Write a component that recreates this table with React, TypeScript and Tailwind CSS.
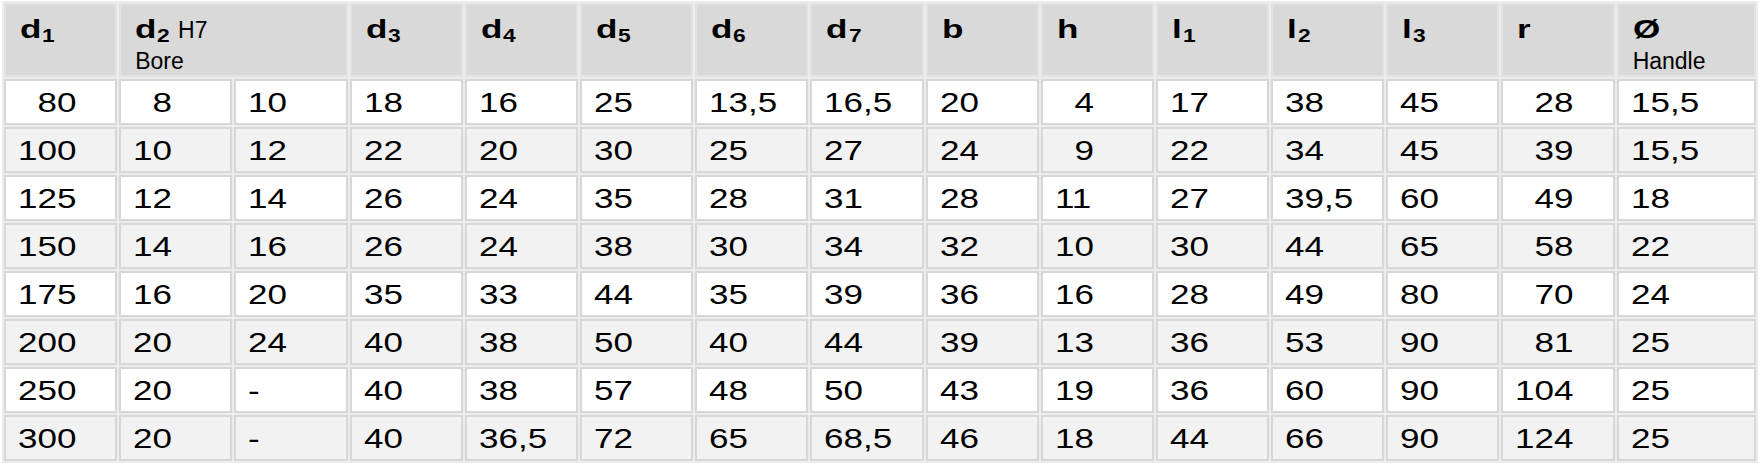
const rows: (number | string)[][] = [
  [80, 8, 10, 18, 16, 25, "13,5", "16,5", 20, 4, 17, 38, 45, 28, "15,5"],
  [100, 10, 12, 22, 20, 30, 25, 27, 24, 9, 22, 34, 45, 39, "15,5"],
  [125, 12, 14, 26, 24, 35, 28, 31, 28, 11, 27, "39,5", 60, 49, 18],
  [150, 14, 16, 26, 24, 38, 30, 34, 32, 10, 30, 44, 65, 58, 22],
  [175, 16, 20, 35, 33, 44, 35, 39, 36, 16, 28, 49, 80, 70, 24],
  [200, 20, 24, 40, 38, 50, 40, 44, 39, 13, 36, 53, 90, 81, 25],
  [250, 20, "-", 40, 38, 57, 48, 50, 43, 19, 36, 60, 90, 104, 25],
  [300, 20, "-", 40, "36,5", 72, 65, "68,5", 46, 18, 44, 66, 90, 124, 25],
];

// columns whose integers line up on the right digit
const padTo: Record<number, number> = { 0: 3, 1: 2, 9: 2, 13: 3 };

const headers: { main: string; sub?: string; extra?: string; note?: string; span?: boolean }[] = [
  { main: "d", sub: "1" },
  { main: "d", sub: "2", extra: "H7", note: "Bore", span: true },
  { main: "d", sub: "3" },
  { main: "d", sub: "4" },
  { main: "d", sub: "5" },
  { main: "d", sub: "6" },
  { main: "d", sub: "7" },
  { main: "b" },
  { main: "h" },
  { main: "l", sub: "1" },
  { main: "l", sub: "2" },
  { main: "l", sub: "3" },
  { main: "r" },
  { main: "Ø", note: "Handle" },
];

function HeaderCell({ h }: { h: (typeof headers)[number] }) {
  // the scaled letter spills past its box, so the subscript gap depends on it
  const subGap = h.main === "l" ? "ml-[4px]" : "ml-[7px]";
  return (
    <div
      className={`${h.span ? "col-span-2" : ""} border-2 border-[#e2e2e2] bg-[#d9d9d9] pl-[14px] pt-[12px] text-black`}
    >
      <div className="flex items-baseline leading-none">
        <span className="inline-block origin-left scale-x-140 text-[25px] font-bold">{h.main}</span>
        {h.sub && (
          <span className={`${subGap} inline-block origin-left translate-y-[4px] scale-x-120 text-[19px] font-bold`}>
            {h.sub}
          </span>
        )}
        {h.extra && <span className="ml-[10px] text-[23px]">{h.extra}</span>}
      </div>
      {h.note && <div className="mt-[8px] text-[23px] leading-none">{h.note}</div>}
    </div>
  );
}

function Value({ v, col }: { v: number | string; col: number }) {
  const text = String(v);
  const pad = typeof v === "number" && padTo[col] ? padTo[col] - text.length : 0;
  return (
    <span className="inline-block origin-left scale-x-125 text-[28px] leading-none">
      {pad > 0 && <span className="invisible">{"0".repeat(pad)}</span>}
      {text}
    </span>
  );
}

export default function App() {
  return (
    <div className="h-[464px] w-[1760px] bg-white pt-[1px] pl-[2px] font-['Liberation_Sans',Arial,sans-serif]">
      <div className="grid w-[1756px] grid-cols-[repeat(14,113.2px)_1fr] grid-rows-[74px_repeat(8,46px)] gap-[2px] bg-[#ececec] p-[2px]">
        {headers.map((h, i) => (
          <HeaderCell key={i} h={h} />
        ))}
        {rows.map((row, r) =>
          row.map((v, c) => (
            <div
              key={`${r}-${c}`}
              className={`flex items-center border-2 border-[#d7d7d7] pl-[12px] pt-[2px] text-black ${
                r % 2 === 0 ? "bg-white" : "bg-[#f2f2f2]"
              }`}
            >
              <Value v={v} col={c} />
            </div>
          ))
        )}
      </div>
    </div>
  );
}
